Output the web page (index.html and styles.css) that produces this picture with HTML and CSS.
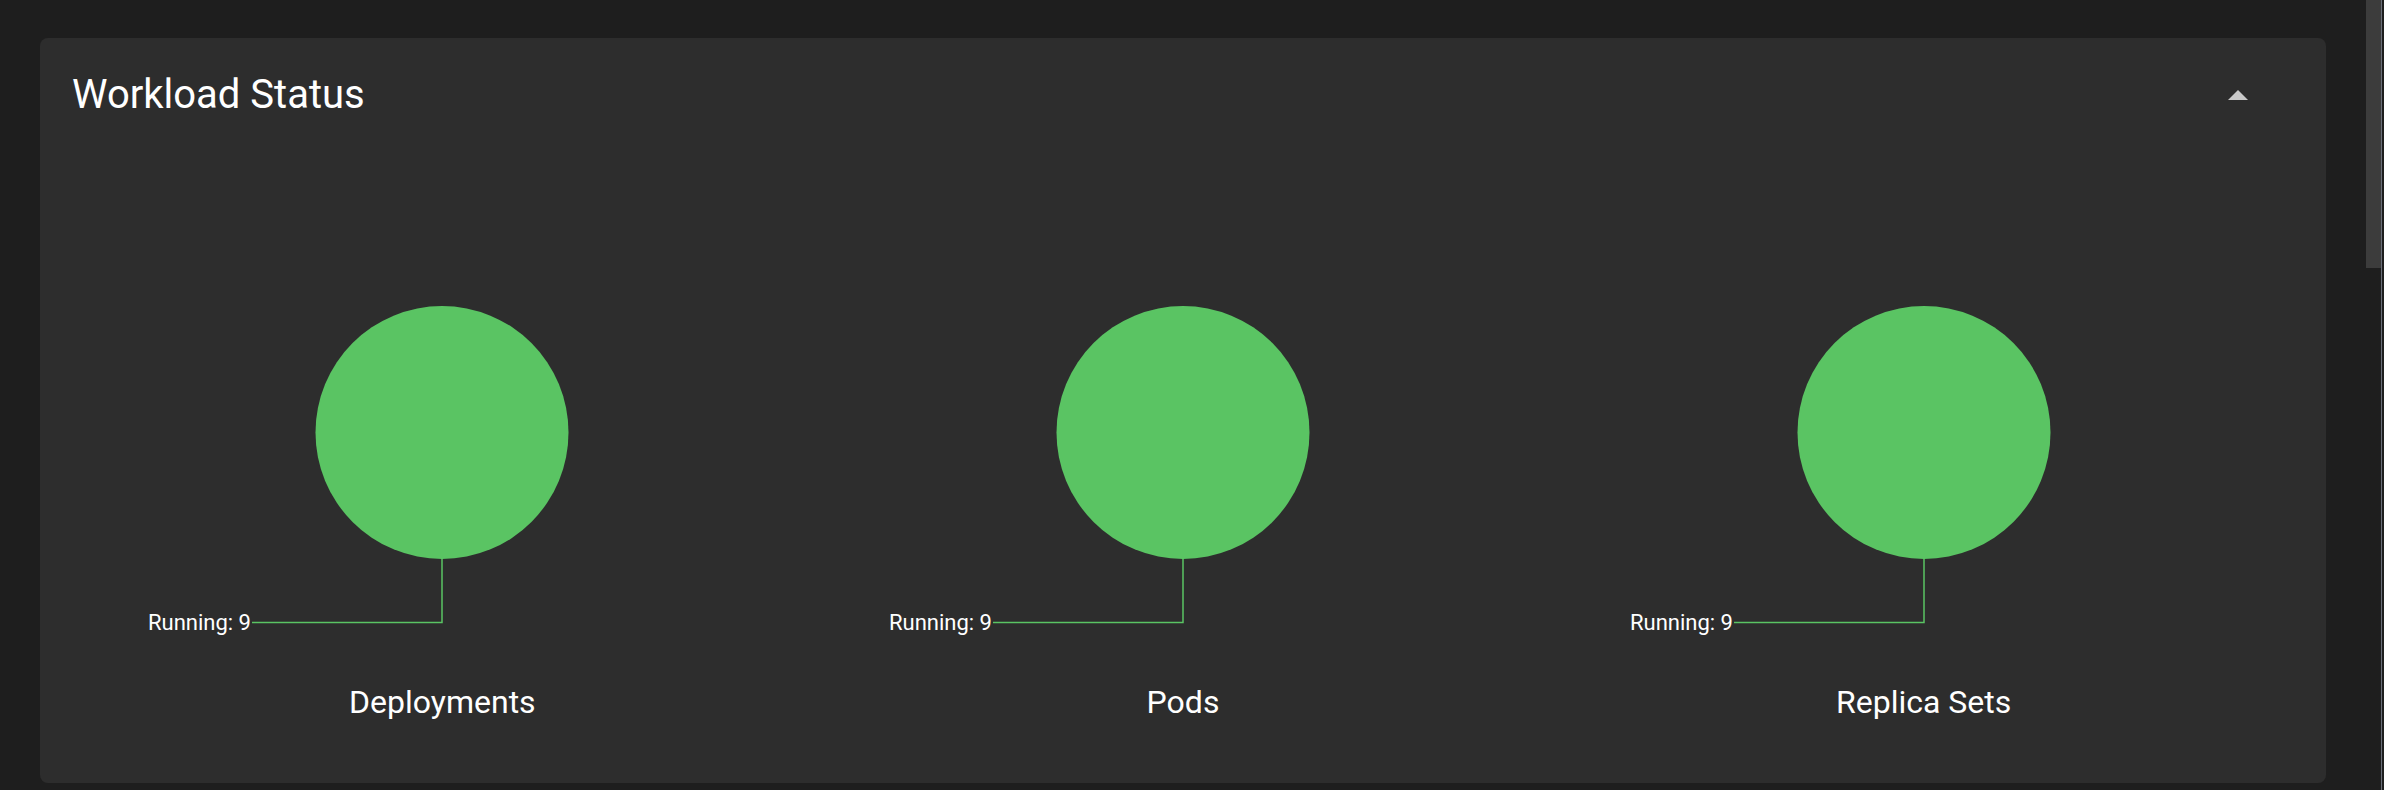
FILE: index.html
```html
<!DOCTYPE html>
<html>
<head>
<meta charset="utf-8">
<link rel="stylesheet" href="styles.css">
</head>
<body>
<div class="page">
  <section class="card">
    <header class="card-header">
      <h2 class="card-title">Workload Status</h2>
      <button class="collapse-btn" aria-label="collapse">
        <svg width="20" height="10" viewBox="0 0 20 10"><path d="M0 10 L10 0 L20 10 Z" fill="#c9c9c9"/></svg>
      </button>
    </header>
    <div class="charts">
      <div class="chart">
        <svg class="donut" width="740" height="370" viewBox="0 0 740 370">
          <circle cx="370" cy="151.5" r="126.5" fill="#5ac463"/>
          <path d="M370 278 V341.5 H180" fill="none" stroke="#5ac463" stroke-width="1.5"/>
          <text x="179" y="349" text-anchor="end" class="arc-label">Running: 9</text>
        </svg>
        <div class="chart-name">Deployments</div>
      </div>
      <div class="chart">
        <svg class="donut" width="740" height="370" viewBox="0 0 740 370">
          <circle cx="370" cy="151.5" r="126.5" fill="#5ac463"/>
          <path d="M370 278 V341.5 H180" fill="none" stroke="#5ac463" stroke-width="1.5"/>
          <text x="179" y="349" text-anchor="end" class="arc-label">Running: 9</text>
        </svg>
        <div class="chart-name">Pods</div>
      </div>
      <div class="chart">
        <svg class="donut" width="740" height="370" viewBox="0 0 740 370">
          <circle cx="370" cy="151.5" r="126.5" fill="#5ac463"/>
          <path d="M370 278 V341.5 H180" fill="none" stroke="#5ac463" stroke-width="1.5"/>
          <text x="179" y="349" text-anchor="end" class="arc-label">Running: 9</text>
        </svg>
        <div class="chart-name">Replica Sets</div>
      </div>
    </div>
  </section>
</div>
<div class="scrollbar"><div class="scroll-thumb"></div></div>
</body>
</html>
```
FILE: styles.css
```css
html, body {
  margin: 0;
  padding: 0;
  background: #1e1e1e;
  font-family: Roboto, "Noto Sans", sans-serif;
  color: #ffffff;
  overflow: hidden;
}
.page {
  padding: 38px 58px 0 40px;
}
.card {
  width: 2286px;
  box-sizing: border-box;
  background: #2d2d2d;
  border-radius: 8px;
  padding: 33px 32px 62px 32px;
}
.card-header {
  display: flex;
  align-items: center;
  justify-content: space-between;
  height: 48px;
}
.card-title {
  margin: 0;
  font-size: 40px;
  line-height: 48px;
  font-weight: 400;
  color: #ffffff;
}
.collapse-btn {
  background: none;
  border: 0;
  padding: 0;
  margin-right: 46px;
  width: 20px;
  height: 10px;
  display: flex;
}
.charts {
  margin-top: 162px;
  display: grid;
  grid-template-columns: repeat(3, 1fr);
}
.chart {
  display: flex;
  flex-direction: column;
  align-items: center;
}
.donut {
  display: block;
  overflow: visible;
}
.arc-label {
  font-family: Roboto, sans-serif;
  font-size: 22px;
  font-weight: 400;
  fill: #ffffff;
}
.chart-name {
  margin-top: 32px;
  font-size: 32px;
  line-height: 38px;
  color: #ffffff;
}
.scrollbar {
  position: fixed;
  top: 0;
  right: 0;
  width: 18px;
  height: 790px;
  background: #1e1e1e;
}
.scrollbar::after {
  content: "";
  position: absolute;
  top: 0;
  right: 2px;
  width: 1px;
  height: 790px;
  background: #6a6e78;
}
.scroll-thumb {
  position: absolute;
  top: 0;
  left: 0;
  width: 15px;
  height: 268px;
  background: #3c3c3c;
}
```
